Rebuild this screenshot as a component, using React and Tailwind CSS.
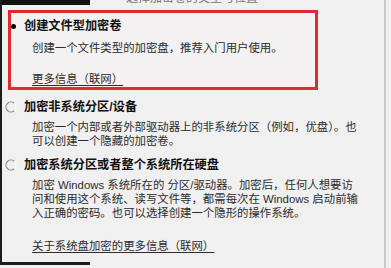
import React from "react";

function Radio() {
  return (
    <svg width="12" height="12" viewBox="0 0 12 12" className="shrink-0">
      <path d="M9.2 2.2 A5 5 0 1 0 9.2 9.8" fill="none" stroke="#8a8a8a" strokeWidth="1.2" />
      <path d="M9.2 2.2 A5 5 0 0 1 9.2 9.8" fill="none" stroke="#ffffff" strokeWidth="1.2" />
    </svg>
  );
}

export default function App() {
  return (
    <div
      className="w-[391px] h-[268px] bg-[#f0f0f0] flex overflow-hidden"
      style={{ fontFamily: '"Liberation Sans", "Noto Sans CJK SC", sans-serif' }}
    >
      <div className="w-[384px] flex flex-col">
        <div className="h-[262px] border-l-2 border-[#1c1c1c] flex flex-col">
          <div className="h-[10px] flex">
            <div className="w-[88px] h-[5px] bg-[#111]" />
            <div className="h-[5px] overflow-hidden ml-[36px]">
              <div className="text-[12px] leading-[12px] mt-[-8px] text-[#777] whitespace-nowrap">
                选择加密卷的类型与位置
              </div>
            </div>
          </div>

          <div className="ml-[6px] w-[310px] h-[80px] border-[3px] border-[#df2a30] bg-[#f3f1f1] flex flex-col pt-[6px]">
            <div className="flex items-center h-[14px]">
              <div className="w-[5px] h-[5px] rounded-full bg-black" />
              <div className="ml-[8px] text-[12.2px] leading-[14px] font-bold text-[#111] whitespace-nowrap">
                创建文件型加密卷
              </div>
            </div>
            <div className="mt-[8px] pl-[21px] text-[11.4px] leading-[14px] text-[#2c2c2c] whitespace-nowrap">
              创建一个文件类型的加密盘，推荐入门用户使用。
            </div>
            <div className="mt-[17px] pl-[21px] text-[11.4px] leading-[14px] text-[#2c2c2c] whitespace-nowrap">
              <span className="underline underline-offset-2">更多信息（联网）</span>
            </div>
          </div>

          <div className="mt-[10px] flex items-center h-[14px] pl-[3px]">
            <Radio />
            <div className="ml-[7px] text-[12.2px] leading-[14px] font-bold text-[#111] whitespace-nowrap">
              加密非系统分区/设备
            </div>
          </div>
          <div className="mt-[6px] pl-[30px] text-[11.4px] leading-[14px] text-[#2c2c2c] whitespace-nowrap">
            加密一个内部或者外部驱动器上的非系统分区（例如，优盘）。也
            <br />
            可以创建一个隐藏的加密卷。
          </div>

          <div className="mt-[10px] flex items-center h-[14px] pl-[3px]">
            <Radio />
            <div className="ml-[7px] text-[12.2px] leading-[14px] font-bold text-[#111] whitespace-nowrap">
              加密系统分区或者整个系统所在硬盘
            </div>
          </div>
          <div className="mt-[6px] pl-[30px] text-[11.4px] leading-[14px] text-[#2c2c2c] whitespace-nowrap">
            加密 Windows 系统所在的 分区/驱动器。加密后，任何人想要访
            <br />
            问和使用这个系统、读写文件等，都需每次在 Windows 启动前输
            <br />
            入正确的密码。也可以选择创建一个隐形的操作系统。
          </div>
          <div className="mt-[19px] pl-[30px] text-[11.4px] leading-[14px] text-[#2c2c2c] whitespace-nowrap">
            <span className="underline underline-offset-2">关于系统盘加密的更多信息（联网）</span>
          </div>
        </div>
        <div className="h-[3px] w-[90px] bg-[#1c1c1c]" />
      </div>
      <div className="w-[2px] h-full bg-[#c8c8c8]" />
      <div className="flex-1 h-full bg-[#f6f6f6] flex">
        <div className="w-[2px]" />
        <div className="w-px h-full bg-[#e4e4e4]" />
      </div>
    </div>
  );
}
